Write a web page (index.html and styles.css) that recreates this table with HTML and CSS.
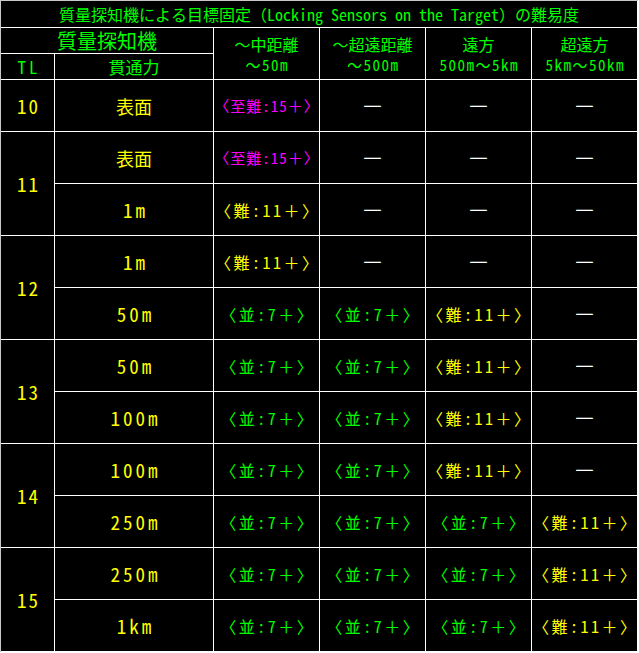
FILE: index.html
```html
<!DOCTYPE html>
<html lang="ja">
<head>
<meta charset="utf-8">
<title>質量探知機による目標固定の難易度</title>
<link rel="stylesheet" href="styles.css">
</head>
<body>
<div class="sheet">
  <div class="cell title">質量探知機による目標固定（Locking Sensors on the Target）の難易度</div>

  <div class="cell head-main">質量探知機</div>
  <div class="cell head-range"><span class="l1">〜中距離</span><span class="l2">〜50m</span></div>
  <div class="cell head-range"><span class="l1">〜超遠距離</span><span class="l2">〜500m</span></div>
  <div class="cell head-range"><span class="l1">遠方</span><span class="l2">500m〜5km</span></div>
  <div class="cell head-range"><span class="l1">超遠方</span><span class="l2">5km〜50km</span></div>
  <div class="cell head-sub wide">TL</div>
  <div class="cell head-sub">貫通力</div>

  <!-- TL 10 -->
  <div class="cell tl">10</div>
  <div class="cell pen">表面</div>
  <div class="cell diff mag">〈至難:15＋〉</div>
  <div class="cell dash">―</div>
  <div class="cell dash">―</div>
  <div class="cell dash">―</div>

  <!-- TL 11 -->
  <div class="cell tl span2">11</div>
  <div class="cell pen">表面</div>
  <div class="cell diff mag">〈至難:15＋〉</div>
  <div class="cell dash">―</div>
  <div class="cell dash">―</div>
  <div class="cell dash">―</div>
  <div class="cell pen num">1m</div>
  <div class="cell diff yel">〈難:11＋〉</div>
  <div class="cell dash">―</div>
  <div class="cell dash">―</div>
  <div class="cell dash">―</div>

  <!-- TL 12 -->
  <div class="cell tl span2">12</div>
  <div class="cell pen num">1m</div>
  <div class="cell diff yel">〈難:11＋〉</div>
  <div class="cell dash">―</div>
  <div class="cell dash">―</div>
  <div class="cell dash">―</div>
  <div class="cell pen num">50m</div>
  <div class="cell diff grn">〈並:7＋〉</div>
  <div class="cell diff grn">〈並:7＋〉</div>
  <div class="cell diff yel">〈難:11＋〉</div>
  <div class="cell dash">―</div>

  <!-- TL 13 -->
  <div class="cell tl span2">13</div>
  <div class="cell pen num">50m</div>
  <div class="cell diff grn">〈並:7＋〉</div>
  <div class="cell diff grn">〈並:7＋〉</div>
  <div class="cell diff yel">〈難:11＋〉</div>
  <div class="cell dash">―</div>
  <div class="cell pen num">100m</div>
  <div class="cell diff grn">〈並:7＋〉</div>
  <div class="cell diff grn">〈並:7＋〉</div>
  <div class="cell diff yel">〈難:11＋〉</div>
  <div class="cell dash">―</div>

  <!-- TL 14 -->
  <div class="cell tl span2">14</div>
  <div class="cell pen num">100m</div>
  <div class="cell diff grn">〈並:7＋〉</div>
  <div class="cell diff grn">〈並:7＋〉</div>
  <div class="cell diff yel">〈難:11＋〉</div>
  <div class="cell dash">―</div>
  <div class="cell pen num">250m</div>
  <div class="cell diff grn">〈並:7＋〉</div>
  <div class="cell diff grn">〈並:7＋〉</div>
  <div class="cell diff grn">〈並:7＋〉</div>
  <div class="cell diff yel">〈難:11＋〉</div>

  <!-- TL 15 -->
  <div class="cell tl span2">15</div>
  <div class="cell pen num">250m</div>
  <div class="cell diff grn">〈並:7＋〉</div>
  <div class="cell diff grn">〈並:7＋〉</div>
  <div class="cell diff grn">〈並:7＋〉</div>
  <div class="cell diff yel">〈難:11＋〉</div>
  <div class="cell pen num">1km</div>
  <div class="cell diff grn">〈並:7＋〉</div>
  <div class="cell diff grn">〈並:7＋〉</div>
  <div class="cell diff grn">〈並:7＋〉</div>
  <div class="cell diff yel">〈難:11＋〉</div>
</div>
</body>
</html>
```

FILE: styles.css
```css
html, body {
  margin: 0;
  padding: 0;
  background: #ffffff;
}

body {
  font-family: "Noto Sans Mono CJK JP", "Noto Sans CJK JP", "Noto Sans", monospace;
  width: 639px;
  height: 653px;
  overflow: hidden;
}

.sheet {
  display: grid;
  grid-template-columns: 53px 158px 105px 105px 105px 105px;
  grid-template-rows: 26px 25px 25px repeat(11, 51px);
  gap: 1px;
  width: max-content;
  background: #ffffff;
  border-top: 1px solid #c8c8c8;
  border-left: 1px solid #c8c8c8;
  padding: 0 1px 1px 0;
}

.cell {
  background: #000000;
  display: flex;
  align-items: center;
  justify-content: center;
  white-space: nowrap;
  line-height: 1;
}

.title {
  grid-column: 1 / -1;
  color: #00ff00;
  font-size: 16px;
}

.head-main {
  grid-column: span 2;
  color: #00ff00;
  font-size: 20px;
}

.head-range {
  grid-row: span 2;
  flex-direction: column;
  color: #00ff00;
  font-size: 16px;
  gap: 5px;
}

.head-range .l2 {
  font-size: 15px;
  letter-spacing: 1.5px;
  padding-left: 1.5px;
}

.head-sub {
  color: #00ff00;
  font-size: 17px;
}

.head-sub.wide {
  letter-spacing: 3px;
  padding-left: 3px;
}

.tl {
  color: #ffff00;
  font-size: 19px;
  letter-spacing: 2px;
  padding-left: 2px;
}

.span2 {
  grid-row: span 2;
}

.pen {
  color: #ffff00;
  font-size: 18px;
}

.pen.num {
  font-size: 19px;
  letter-spacing: 3px;
  padding-left: 3px;
}

.diff {
  font-size: 16px;
  letter-spacing: 2.5px;
  padding-left: 2.5px;
}

.diff.mag {
  font-size: 15px;
  letter-spacing: 1px;
  padding-left: 1px;
}

.mag { color: #ff00ff; }
.yel { color: #ffff00; }
.grn { color: #00ff00; }

.dash {
  color: #ffffff;
  font-size: 19px;
  font-weight: 700;
  -webkit-text-stroke: 0.4px #ffffff;
}
```
